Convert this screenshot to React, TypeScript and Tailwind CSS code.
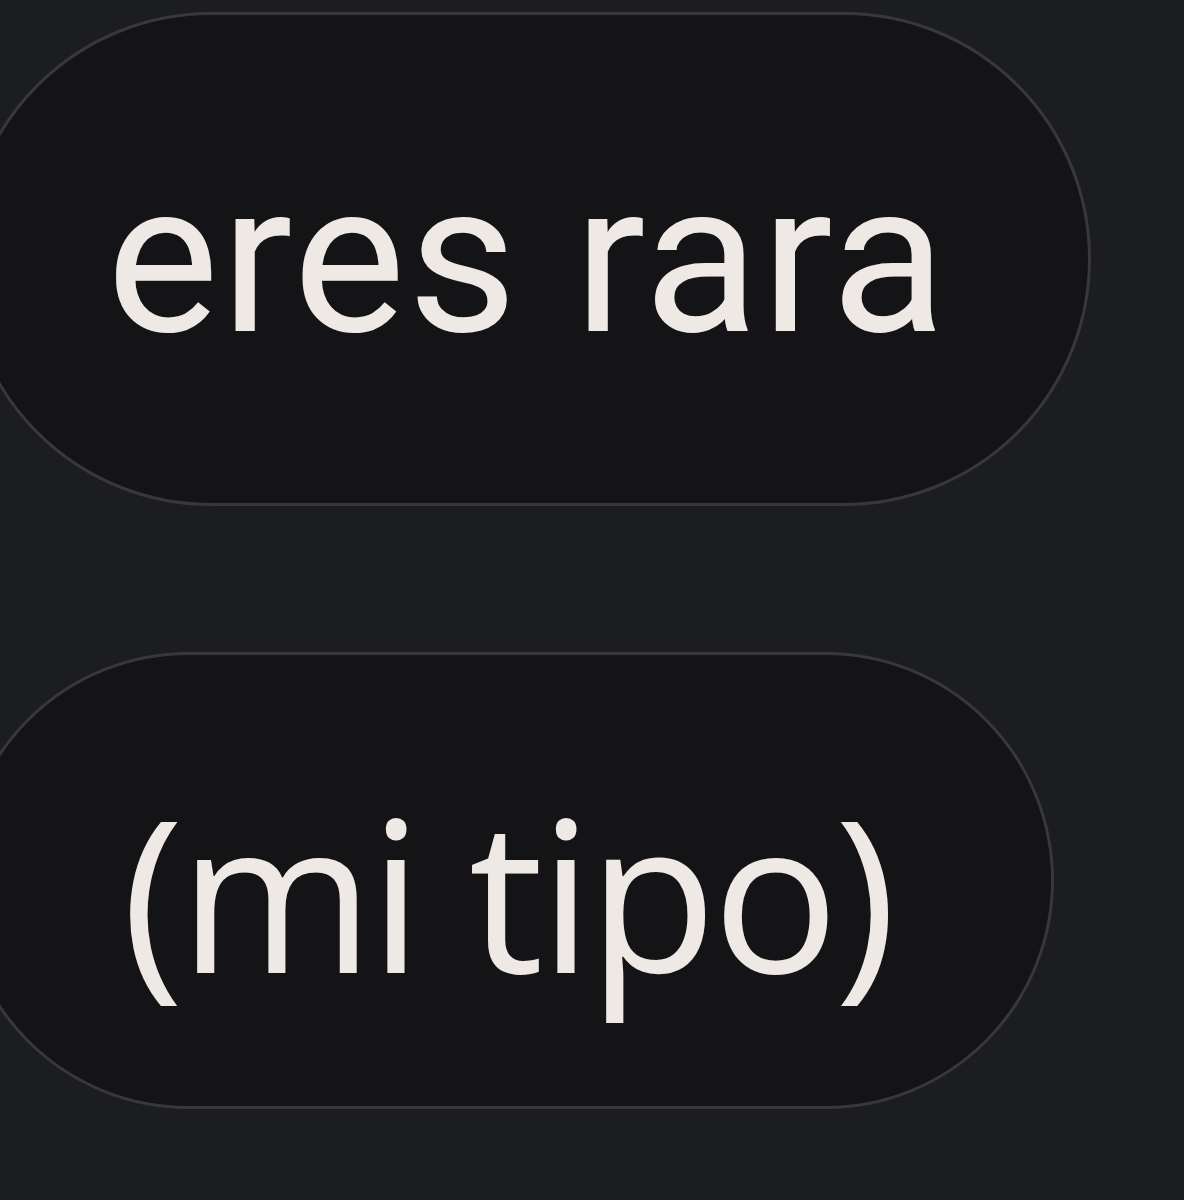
export default function App() {
  return (
    <div className="w-[1184px] h-[1200px] overflow-hidden bg-[#1c1d21] pt-[12px]">
      <div className="flex flex-col gap-[146px]">
        {/* first bubble */}
        <div className="-ml-[36px] w-[1127px] h-[494px] rounded-full border-[3px] border-[#37373c] bg-[#141316] flex items-center justify-center">
          <span
            className="text-[#efe9e6] text-[212px] leading-none tracking-[0.01em]"
            style={{ fontFamily: "Roboto, 'Liberation Sans', sans-serif" }}
          >
            eres rara
          </span>
        </div>

        {/* second bubble */}
        <div className="-ml-[40px] w-[1094px] h-[457px] rounded-full border-[3px] border-[#37373c] bg-[#141316] flex items-center justify-center">
          <span
            className="text-[#efe9e6] text-[210px] leading-none tracking-[-0.02em] pt-[22px]"
            style={{ fontFamily: "'Open Sans', 'Noto Sans', sans-serif" }}
          >
            (mi tipo)
          </span>
        </div>
      </div>
    </div>
  );
}
